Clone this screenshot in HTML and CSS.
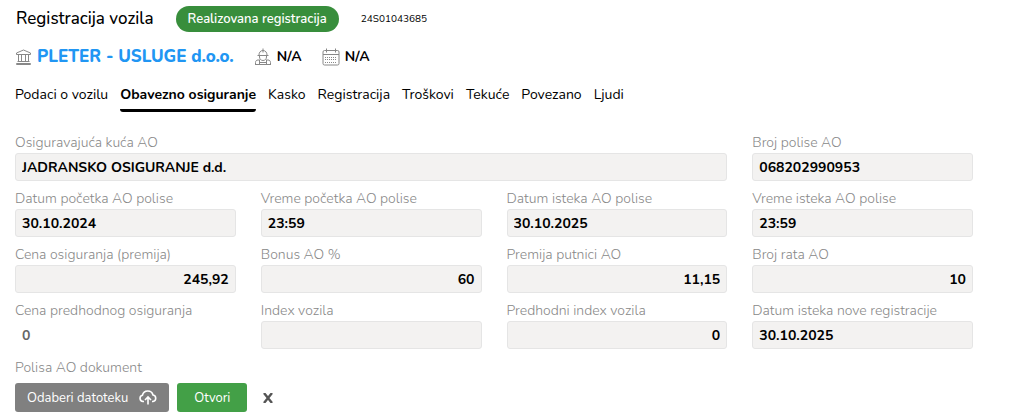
FILE: index.html
```html
<!DOCTYPE html>
<html lang="sr-Latn">
<head>
    <meta charset="UTF-8">
    <meta name="viewport" content="width=device-width, initial-scale=1.0">
    <title>Registracija vozila</title>
    <link rel="stylesheet" href="styles.css">
</head>
<body>
    <header class="page-header">
        <h1>Registracija vozila</h1>
        <span class="status">Realizovana registracija</span>
        <span class="code">24S01043685</span>
    </header>

    <div class="info">
        <div class="info-item">
            <svg class="icon icon-bank" viewBox="0 0 17 17" aria-hidden="true">
                <path d="M1.500 5.500V4L8.500 1l7 3v1.500zM3.500 6v7M6.500 6v7M10.500 6v7M13.500 6v7M2.500 12.500h12M1.500 15.500v-1h14v1z"/>
            </svg>
            <a class="client" href="#">PLETER - USLUGE d.o.o.</a>
        </div>
        <div class="info-item">
            <svg class="icon icon-large" viewBox="0 0 18 18" aria-hidden="true">
                <path d="M9 0.500v4M5 7c0-2.500 1.500-4.500 4-4.500S13 4.500 13 7M3.500 7.500h11M5.500 8v1c0 2 1.500 3.500 3.500 3.500s3.500-1.500 3.500-3.500V8M1.500 16.500v-2c0-1.500 1-2.500 2.500-2.500h2M12 12h2c1.500 0 2.500 1 2.500 2.500v2M1 16.500h16M5.500 12v4.500M12.500 12v4.500M6 14.500h6"/>
            </svg>
            <span class="value">N/A</span>
        </div>
        <div class="info-item">
            <svg class="icon icon-large" viewBox="0 0 18 18" aria-hidden="true">
                <path d="M2.500 2.500h13a1.500 1.500 0 0 1 1.500 1.500v11.500a1.500 1.500 0 0 1-1.500 1.500h-13A1.500 1.500 0 0 1 1 15.500V4a1.500 1.500 0 0 1 1.500-1.500zM1 6.500h16M4.500 0.500v4M13.500 0.500v4"/>
                <path class="days" d="M3 9.500h12M3 11.500h12M3 14.500h12"/>
            </svg>
            <span class="value">N/A</span>
        </div>
    </div>

    <nav class="tabs">
        <a href="#">Podaci o vozilu</a>
        <a href="#" class="active">Obavezno osiguranje</a>
        <a href="#">Kasko</a>
        <a href="#">Registracija</a>
        <a href="#">Troškovi</a>
        <a href="#">Tekuće</a>
        <a href="#">Povezano</a>
        <a href="#">Ljudi</a>
    </nav>

    <form class="form">
        <div class="field wide">
            <label for="company">Osiguravajuća kuća AO</label>
            <input type="text" id="company" value="JADRANSKO OSIGURANJE d.d." readonly>
        </div>
        <div class="field">
            <label for="policy">Broj polise AO</label>
            <input type="text" id="policy" value="068202990953" readonly>
        </div>

        <div class="field">
            <label for="start-date">Datum početka AO polise</label>
            <input type="text" id="start-date" value="30.10.2024" readonly>
        </div>
        <div class="field">
            <label for="start-time">Vreme početka AO polise</label>
            <input type="text" id="start-time" value="23:59" readonly>
        </div>
        <div class="field">
            <label for="end-date">Datum isteka AO polise</label>
            <input type="text" id="end-date" value="30.10.2025" readonly>
        </div>
        <div class="field">
            <label for="end-time">Vreme isteka AO polise</label>
            <input type="text" id="end-time" value="23:59" readonly>
        </div>

        <div class="field">
            <label for="price">Cena osiguranja (premija)</label>
            <input type="text" id="price" class="number" value="245,92" readonly>
        </div>
        <div class="field">
            <label for="bonus">Bonus AO %</label>
            <input type="text" id="bonus" class="number" value="60" readonly>
        </div>
        <div class="field">
            <label for="passengers">Premija putnici AO</label>
            <input type="text" id="passengers" class="number" value="11,15" readonly>
        </div>
        <div class="field">
            <label for="rates">Broj rata AO</label>
            <input type="text" id="rates" class="number" value="10" readonly>
        </div>

        <div class="field">
            <label for="old-price">Cena predhodnog osiguranja</label>
            <input type="text" id="old-price" class="plain" value="0" readonly>
        </div>
        <div class="field">
            <label for="index">Index vozila</label>
            <input type="text" id="index" class="number" value="" readonly>
        </div>
        <div class="field">
            <label for="old-index">Predhodni index vozila</label>
            <input type="text" id="old-index" class="number" value="0" readonly>
        </div>
        <div class="field">
            <label for="next-date">Datum isteka nove registracije</label>
            <input type="text" id="next-date" value="30.10.2025" readonly>
        </div>
    </form>

    <div class="document">
        <div class="document-label">Polisa AO dokument</div>
        <div class="actions">
            <button type="button" class="btn btn-file">
                Odaberi datoteku
                <svg class="upload" viewBox="0 0 18 15" aria-hidden="true">
                    <path d="M5 11.500H4A3.200 3.200 0 0 1 3.500 5.200 5.400 5.400 0 0 1 14 5a3.300 3.300 0 0 1 0 6.500h-1M9 14.500V7.500M6 10l3-3 3 3"/>
                </svg>
            </button>
            <button type="button" class="btn btn-open">Otvori</button>
            <button type="button" class="btn-remove" aria-label="Ukloni">
                <svg viewBox="0 0 10 10" aria-hidden="true">
                    <path d="M1 0 9 10M9 0 1 10"/>
                </svg>
            </button>
        </div>
    </div>
</body>
</html>
```
FILE: styles.css
```css
* {
    box-sizing: border-box;
}
body {
    margin: 0;
    padding: 6px 37px 6px 15px;
    background-color: #fff;
    color: #000;
    font-family: Nunito, Lato, sans-serif;
    font-size: 14px;
    line-height: 18px;
}
a {
    color: inherit;
    text-decoration: none;
}
.page-header {
    display: flex;
    align-items: center;
    gap: 22px;
    padding-left: 1px;
}
h1 {
    margin: 0;
    font-size: 17px;
    font-weight: 500;
}
.status {
    padding: 4px 12px;
    border-radius: 13px;
    background-color: #388e3c;
    color: #fff;
    font-size: 13px;
    font-weight: 600;
}
.code {
    font-size: 10px;
}
.info {
    display: flex;
    align-items: center;
    gap: 20px;
    margin-top: 15px;
}
.info-item {
    display: flex;
    align-items: center;
    gap: 5px;
    height: 20px;
}
.icon {
    width: 17px;
    height: 17px;
    fill: none;
    stroke: #888;
    stroke-width: 1;
}
.icon-large {
    width: 18px;
    height: 18px;
}
.days {
    stroke-dasharray: 1 1;
}
.client {
    color: #2196f3;
    font-size: 17px;
    font-weight: 800;
}
.value {
    font-weight: bold;
}
.tabs {
    display: flex;
    gap: 12px;
    margin-top: 15px;
}
.tabs a {
    padding: 4px 0 5px;
    border-bottom: 3px solid transparent;
    border-radius: 3px;
}
.tabs .active {
    border-bottom-color: #000;
    font-weight: bold;
}
.form {
    display: grid;
    grid-template-columns: repeat(4, 1fr);
    gap: 9px 25px;
    margin-top: 22px;
}
.field {
    min-width: 0;
}
.wide {
    grid-column: span 3;
}
.field label,
.document-label {
    display: block;
    margin-bottom: 1px;
    color: #888;
    font-weight: 300;
}
.field input {
    display: block;
    width: 100%;
    height: 28px;
    padding: 0 6px;
    border: 1px solid #e5e5e5;
    border-radius: 3px;
    background-color: #f3f2f1;
    color: #000;
    font: inherit;
    font-weight: bold;
}
.field .number {
    text-align: right;
}
.field .plain {
    border-color: transparent;
    background-color: transparent;
    color: #666;
}
.document {
    margin-top: 10px;
}
.document-label {
    margin-bottom: 6px;
}
.actions {
    display: flex;
    align-items: center;
    gap: 8px;
}
.btn {
    display: flex;
    align-items: center;
    gap: 11px;
    height: 29px;
    border: none;
    border-radius: 3px;
    color: #fff;
    font: inherit;
    font-size: 13px;
    cursor: pointer;
}
.btn-file {
    padding: 0 12px;
    background-color: #808080;
}
.btn-open {
    padding: 0 17px;
    background-color: #43a047;
}
.upload {
    width: 18px;
    height: 15px;
    fill: none;
    stroke: #fff;
    stroke-width: 1.6;
}
.btn-remove {
    padding: 4px 8px;
    border: none;
    background: none;
    cursor: pointer;
}
.btn-remove svg {
    display: block;
    width: 10px;
    height: 10px;
    fill: none;
    stroke: #555;
    stroke-width: 2.4;
}
```
